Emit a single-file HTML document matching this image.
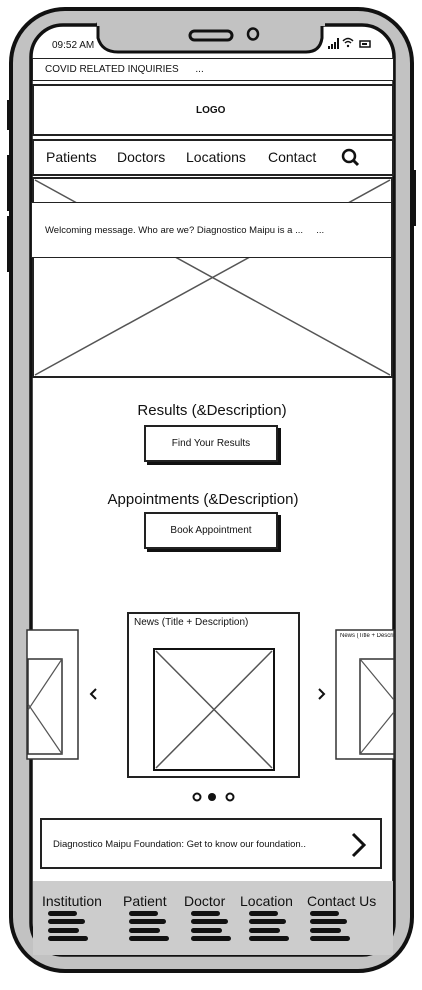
<!DOCTYPE html>
<html><head><style>
body{margin:0;width:422px;height:990px;background:#fff;position:relative;overflow:hidden;font-family:"Liberation Sans",sans-serif;color:#111}
.a{position:absolute}
.t{position:absolute;white-space:nowrap}
.box{position:absolute;border:2px solid #222;background:#fff;box-sizing:border-box}
.bar{position:absolute;height:5px;background:#111;border-radius:3px}
</style></head><body>
<svg class="a" style="left:0;top:0" width="422" height="990">
  <rect x="7" y="100" width="6" height="30" fill="#111"/>
  <rect x="7" y="155" width="6" height="56" fill="#111"/>
  <rect x="7" y="216" width="6" height="56" fill="#111"/>
  <rect x="410" y="170" width="6" height="56" fill="#111"/>
  <rect x="11" y="9" width="401" height="962" rx="54" fill="#c2c2c2" stroke="#111" stroke-width="4"/>
  <rect x="31" y="25" width="363" height="930" rx="32" fill="#fff" stroke="#111" stroke-width="3.5"/>
  <path d="M98 24 L98 38 Q102 52 118 52 L306 52 Q320 52 322 38 L322 24 Z" fill="#c2c2c2" stroke="#111" stroke-width="3"/>
  <rect x="97" y="20" width="228" height="6" fill="#c2c2c2"/>
  <rect x="190" y="31" width="42" height="9" rx="4.5" fill="none" stroke="#111" stroke-width="3"/>
  <ellipse cx="253" cy="34" rx="5" ry="5.5" fill="none" stroke="#111" stroke-width="2.5"/>
  <rect x="33" y="881" width="360" height="74" fill="#ccc"/>
  <rect x="328" y="46" width="2" height="3" fill="#111"/><rect x="331" y="44" width="2" height="5" fill="#111"/><rect x="334" y="42" width="2" height="7" fill="#111"/><rect x="337" y="38" width="2" height="11" fill="#111"/>
  <path d="M343 41 Q348 36 353 41 M345 43 Q348 40 351 43" stroke="#111" stroke-width="1.5" fill="none"/><circle cx="348" cy="46" r="1.2" fill="#111"/>
  <rect x="360" y="41" width="10" height="6" fill="none" stroke="#111" stroke-width="1.5"/><rect x="362" y="43" width="5" height="2" fill="#111"/>
  <rect x="33" y="178" width="359" height="199" fill="#fff" stroke="#222" stroke-width="2"/>
  <path d="M35 180 L390 375 M390 180 L35 375" stroke="#555" stroke-width="1.5"/>
  <rect x="27" y="630" width="51" height="129" fill="#fff" stroke="#333" stroke-width="1.5"/>
  <rect x="28" y="659" width="34" height="95" fill="#fff" stroke="#333" stroke-width="1.5"/>
  <path d="M28 710 L62 659 M28 704 L62 754" stroke="#555" stroke-width="1.2"/>
  <rect x="336" y="630" width="58" height="129" fill="#fff" stroke="#333" stroke-width="1.5"/>
  <rect x="360" y="659" width="34" height="95" fill="#fff" stroke="#333" stroke-width="1.5"/>
  <path d="M360 659 L394 700 M360 754 L394 712" stroke="#555" stroke-width="1.2"/>
  <rect x="128" y="613" width="171" height="164" fill="#fff" stroke="#222" stroke-width="2"/>
  <rect x="154" y="649" width="120" height="121" fill="#fff" stroke="#111" stroke-width="2"/>
  <path d="M156 651 L272 768 M272 651 L156 768" stroke="#555" stroke-width="1.5"/>
  <path d="M96 689 L91 694 L96 699" stroke="#111" stroke-width="2" fill="none"/>
  <path d="M319 689 L324 694 L319 699" stroke="#111" stroke-width="2" fill="none"/>
  <circle cx="197" cy="797" r="3.5" fill="none" stroke="#111" stroke-width="2"/>
  <circle cx="212" cy="797" r="4" fill="#111"/>
  <circle cx="230" cy="797" r="3.5" fill="none" stroke="#111" stroke-width="2"/>
</svg>
<div class="t" style="left:52px;top:40px;font-size:10px">09:52 AM</div>
<div class="box" style="left:32px;top:58px;width:362px;height:23px;border-width:1.5px"></div>
<div class="t" style="left:45px;top:64px;font-size:10px">COVID RELATED INQUIRIES &nbsp;&nbsp;&nbsp;&nbsp;&nbsp;...</div>
<div class="box" style="left:32px;top:84px;width:362px;height:52px"></div>
<div class="t" style="left:196px;top:105px;font-size:10px;font-weight:bold">LOGO</div>
<div class="box" style="left:32px;top:139px;width:362px;height:37px"></div>
<div class="t" style="left:46px;top:149px;font-size:14px">Patients</div>
<div class="t" style="left:117px;top:149px;font-size:14px">Doctors</div>
<div class="t" style="left:186px;top:149px;font-size:14px">Locations</div>
<div class="t" style="left:268px;top:149px;font-size:14px">Contact</div>
<div class="box" style="left:31px;top:202px;width:361px;height:56px;border-width:1.5px"></div>
<div class="t" style="left:45px;top:225px;font-size:9.5px">Welcoming message. Who are we? Diagnostico Maipu is a ... &nbsp;&nbsp;&nbsp;&nbsp;...</div>
<div class="t" style="width:422px;text-align:center;top:402px;font-size:15px;left:1px">Results (&amp;Description)</div>
<div class="box" style="left:144px;top:425px;width:134px;height:37px;box-shadow:3px 3px 0 #111"></div>
<div class="t" style="left:144px;width:134px;text-align:center;top:438px;font-size:10px">Find Your Results</div>
<div class="t" style="width:422px;text-align:center;top:491px;font-size:15px;left:-8px">Appointments (&amp;Description)</div>
<div class="box" style="left:144px;top:512px;width:134px;height:37px;box-shadow:3px 3px 0 #111"></div>
<div class="t" style="left:144px;width:134px;text-align:center;top:525px;font-size:10px">Book Appointment</div>
<div class="t" style="left:134px;top:617px;font-size:10px">News (Title + Description)</div>
<div class="t" style="left:340px;top:633px;font-size:6px;width:54px;overflow:hidden">News (Title + Description)</div>
<div class="box" style="left:40px;top:818px;width:342px;height:51px"></div>
<div class="t" style="left:53px;top:839px;font-size:9.5px">Diagnostico Maipu Foundation: Get to know our foundation..</div>
<svg class="a" style="left:0;top:0" width="422" height="990">
  <circle cx="349" cy="156" r="6" fill="none" stroke="#111" stroke-width="2.5"/>
  <path d="M353 160 L358 165" stroke="#111" stroke-width="3"/>
  <path d="M353 834 L364 845 L353 856" stroke="#111" stroke-width="3" fill="none"/>
</svg>
<div class="t" style="left:42px;top:893px;font-size:14px">Institution</div>
<div class="t" style="left:123px;top:893px;font-size:14px">Patient</div>
<div class="t" style="left:184px;top:893px;font-size:14px">Doctor</div>
<div class="t" style="left:240px;top:893px;font-size:14px">Location</div>
<div class="t" style="left:307px;top:893px;font-size:14px">Contact Us</div>
<div class="bar" style="left:48px;top:911px;width:29px"></div><div class="bar" style="left:48px;top:919px;width:37px"></div><div class="bar" style="left:48px;top:928px;width:31px"></div><div class="bar" style="left:48px;top:936px;width:40px"></div>
<div class="bar" style="left:129px;top:911px;width:29px"></div><div class="bar" style="left:129px;top:919px;width:37px"></div><div class="bar" style="left:129px;top:928px;width:31px"></div><div class="bar" style="left:129px;top:936px;width:40px"></div>
<div class="bar" style="left:191px;top:911px;width:29px"></div><div class="bar" style="left:191px;top:919px;width:37px"></div><div class="bar" style="left:191px;top:928px;width:31px"></div><div class="bar" style="left:191px;top:936px;width:40px"></div>
<div class="bar" style="left:249px;top:911px;width:29px"></div><div class="bar" style="left:249px;top:919px;width:37px"></div><div class="bar" style="left:249px;top:928px;width:31px"></div><div class="bar" style="left:249px;top:936px;width:40px"></div>
<div class="bar" style="left:310px;top:911px;width:29px"></div><div class="bar" style="left:310px;top:919px;width:37px"></div><div class="bar" style="left:310px;top:928px;width:31px"></div><div class="bar" style="left:310px;top:936px;width:40px"></div>
</body></html>
